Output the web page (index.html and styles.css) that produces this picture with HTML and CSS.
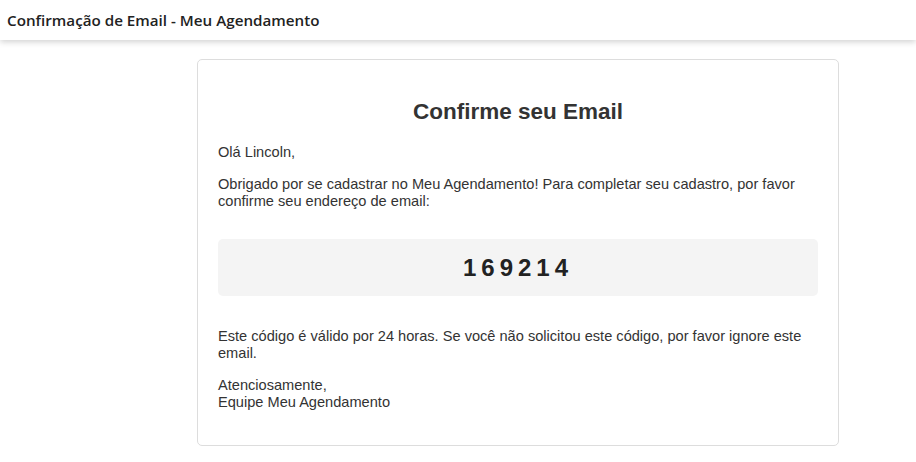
FILE: index.html
```html
<!DOCTYPE html>
<html lang="pt-BR">
<head>
<meta charset="utf-8">
<title>Confirmação de Email - Meu Agendamento</title>
<link rel="stylesheet" href="styles.css">
</head>
<body>
<header class="topbar">Confirmação de Email - Meu Agendamento</header>
<main class="page">
  <div class="card">
    <h2 class="title">Confirme seu Email</h2>
    <p>Olá Lincoln,</p>
    <p>Obrigado por se cadastrar no Meu Agendamento! Para completar seu cadastro, por favor confirme seu endereço de email:</p>
    <div class="code">169214</div>
    <p class="note">Este código é válido por 24 horas. Se você não solicitou este código, por favor ignore este email.</p>
    <p class="sign">Atenciosamente,<br>Equipe Meu Agendamento</p>
  </div>
</main>
</body>
</html>
```
FILE: styles.css
```css
html, body {
  margin: 0;
  padding: 0;
  background: #ffffff;
}
.topbar {
  height: 40px;
  box-sizing: border-box;
  padding: 0 7px;
  display: flex;
  align-items: center;
  font-family: "Open Sans", "Noto Sans", sans-serif;
  font-size: 15.2px;
  font-weight: 600;
  color: #222;
  background: #fff;
  box-shadow: 0 2px 6px rgba(0,0,0,0.18);
  position: relative;
}
.page {
  padding: 19px 0 16px 197px;
}
.card {
  width: 600px;
  padding: 20px;
  border: 1px solid #ddd;
  border-radius: 5px;
  font-family: "Liberation Sans", Arial, sans-serif;
  font-size: 14.6px;
  line-height: 17px;
  color: #333;
}
.title {
  text-align: center;
  font-size: 22.5px;
  line-height: 26px;
  margin: 19px 0 19px;
  color: #333;
}
.card p {
  margin: 15px 0;
}
.code {
  margin: 29px 0 32px;
  background: #f4f4f4;
  border-radius: 5px;
  text-align: center;
  padding: 16px 0;
  font-size: 24px;
  line-height: 25px;
  font-weight: bold;
  letter-spacing: 5px;
  color: #222;
}
.card .sign {
  margin-bottom: 14px;
}
```
